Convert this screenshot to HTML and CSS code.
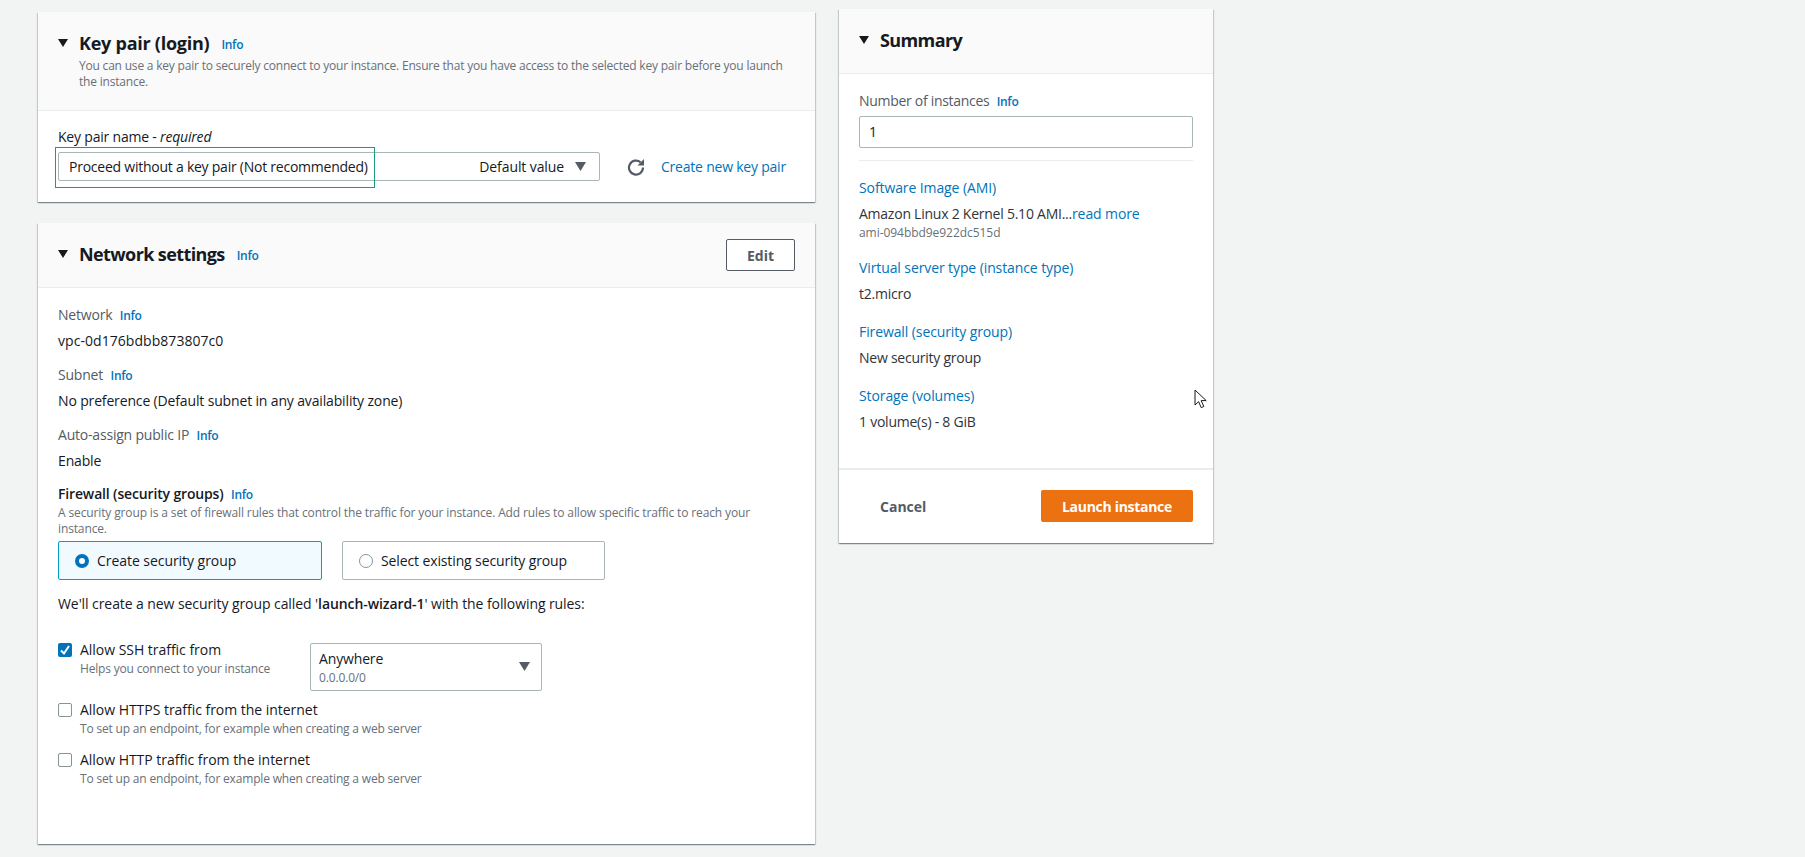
FILE: index.html
```html
<!DOCTYPE html>
<html lang="en">
<head>
<meta charset="utf-8">
<title>Launch an instance</title>
<link rel="stylesheet" href="styles.css">
</head>
<body>
<main class="page">
  <div class="col-left">
    <section class="card card-key">
      <header class="head head-key">
        <div class="title-row">
          <svg class="caret" viewBox="0 0 10 8"><path d="M0 0h10L5 8z"/></svg>
          <h2 class="h-key">Key pair (login)</h2><a class="info info-h">Info</a>
        </div>
        <p class="head-desc">You can use a key pair to securely connect to your instance. Ensure that you have access to the selected key pair before you launch the instance.</p>
      </header>
      <div class="key-body">
        <div class="label key-label">Key pair name - <em>required</em></div>
        <div class="key-row">
          <div class="select">
            <span>Proceed without a key pair (Not recommended)</span>
            <span class="sel-right">Default value
              <svg class="sel-caret" viewBox="0 0 11 9"><path d="M0 0h11L5.500 9z"/></svg>
            </span>
          </div>
          <div class="annotation"></div>
          <svg class="refresh" viewBox="0 0 18 18"><path d="M13.600 4.300A7 7 0 1 0 16 9.500" fill="none" stroke="#545b64" stroke-width="2.200"/><path d="M17 1v6.500h-6.500z" fill="#545b64"/></svg>
          <a class="link create">Create new key pair</a>
        </div>
      </div>
    </section>

    <section class="card card-net">
      <header class="head head-net">
        <div class="title-row">
          <svg class="caret" viewBox="0 0 10 8"><path d="M0 0h10L5 8z"/></svg>
          <h2 class="h-net">Network settings</h2><a class="info info-h">Info</a>
        </div>
        <button class="edit">Edit</button>
      </header>
      <div class="net-body">
        <div class="kv"><div class="label">Network <a class="info">Info</a></div><div class="value value-id">vpc-0d176bdbb873807c0</div></div>
        <div class="kv"><div class="label">Subnet <a class="info">Info</a></div><div class="value">No preference (Default subnet in any availability zone)</div></div>
        <div class="kv kv-last"><div class="label">Auto-assign public IP <a class="info">Info</a></div><div class="value">Enable</div></div>
        <div class="fw-title"><b>Firewall (security groups)</b> <a class="info">Info</a></div>
        <p class="fw-desc">A security group is a set of firewall rules that control the traffic for your instance. Add rules to allow specific traffic to reach your instance.</p>
        <div class="tiles">
          <div class="tile tile-on"><span class="radio radio-on"></span>Create security group</div>
          <div class="tile"><span class="radio"></span>Select existing security group</div>
        </div>
        <p class="will">We'll create a new security group called '<b>launch-wizard-1</b>' with the following rules:</p>
        <div class="rule rule-ssh">
          <span class="check check-on"><svg viewBox="0 0 14 14"><path d="M3 7.500l3 3 5-7.500" fill="none" stroke="#fff" stroke-width="2"/></svg></span>
          <div class="rule-text">
            <div class="rule-label">Allow SSH traffic from</div>
            <div class="rule-help">Helps you connect to your instance</div>
          </div>
          <div class="source">
            <div><div class="src-main">Anywhere</div><div class="src-sub">0.0.0.0/0</div></div>
            <svg class="sel-caret" viewBox="0 0 11 9"><path d="M0 0h11L5.500 9z"/></svg>
          </div>
        </div>
        <div class="rule rule-https">
          <span class="check"></span>
          <div class="rule-text">
            <div class="rule-label">Allow HTTPS traffic from the internet</div>
            <div class="rule-help">To set up an endpoint, for example when creating a web server</div>
          </div>
        </div>
        <div class="rule rule-http">
          <span class="check"></span>
          <div class="rule-text">
            <div class="rule-label">Allow HTTP traffic from the internet</div>
            <div class="rule-help">To set up an endpoint, for example when creating a web server</div>
          </div>
        </div>
      </div>
    </section>
  </div>

  <aside class="card summary">
    <header class="head head-sum">
      <div class="title-row">
        <svg class="caret" viewBox="0 0 10 8"><path d="M0 0h10L5 8z"/></svg>
        <h2 class="h-sum">Summary</h2>
      </div>
    </header>
    <div class="sum-body">
      <div class="label sum-label">Number of instances <a class="info">Info</a></div>
      <div class="input">1</div>
      <hr class="divider">
      <a class="link sum-link">Software Image (AMI)</a>
      <div class="sum-val">Amazon Linux 2 Kernel 5.10 AMI...<a class="link">read more</a></div>
      <div class="sum-sub">ami-094bbd9e922dc515d</div>
      <a class="link sum-link sec-2">Virtual server type (instance type)</a>
      <div class="sum-val">t2.micro</div>
      <a class="link sum-link sec-3">Firewall (security group)</a>
      <div class="sum-val">New security group</div>
      <a class="link sum-link sec-3">Storage (volumes)</a>
      <div class="sum-val">1 volume(s) - 8 GiB</div>
    </div>
    <footer class="sum-foot">
      <button class="cancel">Cancel</button>
      <button class="launch">Launch instance</button>
    </footer>
    <svg class="cursor" viewBox="0 0 13 20"><path d="M1 1v15l3.600-3.400 2.600 6 2.600-1.100-2.600-5.900h5z" fill="#fff" stroke="#16191f" stroke-width="1"/></svg>
  </aside>
</main>
</body>
</html>
```
FILE: styles.css
```css
* { box-sizing: border-box; }
html, body { margin: 0; height: 100%; }
body {
  background: #f2f3f3;
  color: #16191f;
  font-family: "Open Sans", "Noto Sans", sans-serif;
  font-size: 14px;
  line-height: 20px;
  letter-spacing: -.15px;
  overflow: hidden;
}
.page { display: flex; align-items: flex-start; padding-left: 38px; }
.col-left { width: 777px; padding-top: 12px; display: flex; flex-direction: column; gap: 21px; }
.card {
  background: #fff;
  position: relative;
  box-shadow: 0 1px 1px 0 rgba(0,28,36,.3), 1px 1px 1px 0 rgba(0,28,36,.15), -1px 1px 1px 0 rgba(0,28,36,.15);
}
.head { background: #fafafa; border-bottom: 1px solid #eaeded; }
.head-key { height: 99px; padding: 20px 24px 0 20px; }
.head-net { height: 65px; padding: 20px 20px 0 20px; display: flex; justify-content: space-between; }
.head-sum { height: 65px; padding: 20px; }
.title-row { display: flex; align-items: center; height: 22px; }
.caret { width: 10px; height: 8px; fill: #16191f; margin-right: 11px; flex: none; }
h2 { margin: 0; font-size: 18px; line-height: 22px; font-weight: 700; }
.h-key { letter-spacing: -.25px; }
.h-net { letter-spacing: -.6px; }
.h-sum { letter-spacing: -.6px; }
.info { color: #0073bb; font-size: 12px; font-weight: 600; margin-left: 4px; letter-spacing: -.3px; }
.info-h { margin-left: 12px; position: relative; top: 2px; }
.head-desc { margin: 4px 0 0 21px; font-size: 12px; line-height: 16px; color: #687078; letter-spacing: -.2px; }
.label { color: #545b64; letter-spacing: -.2px; }
.link { color: #0073bb; letter-spacing: -.1px; }
.key-body { height: 91px; padding: 16px 20px 0; }
.key-label { color: #16191f; height: 20px; margin-bottom: 5px; }
.key-row { display: flex; align-items: center; position: relative; height: 29px; }
.select {
  width: 542px; height: 29px; padding: 0 13px 0 10px; border: 1px solid #aab7b8; border-radius: 2px;
  display: flex; align-items: center; justify-content: space-between; letter-spacing: -.24px;
}
.sel-right { display: flex; align-items: center; gap: 11px; letter-spacing: -.1px; }
.sel-caret { width: 11px; height: 9px; fill: #545b64; }
.annotation { position: absolute; left: -3px; top: -5px; width: 320px; height: 41px; border: 1px solid #1a9c7a; }
.refresh { width: 18px; height: 18px; margin-left: 27px; flex: none; }
.create { margin-left: 16px; white-space: nowrap; letter-spacing: -.22px; }
.edit {
  width: 69px; height: 32px; margin-top: -4px; background: #fff; border: 1px solid #545b64; border-radius: 2px;
  color: #545b64; font: 700 14px "Open Sans", sans-serif;
}
.net-body { height: 556px; padding: 17px 20px 0; }
.kv { height: 60px; }
.kv-last { height: 59px; }
.kv .value { margin-top: 5px; }
.kv .value-id { letter-spacing: .05px; }
.fw-title { height: 20px; }
.fw-title b { font-weight: 600; }
.fw-desc { margin: 0; height: 32px; padding-top: 1px; font-size: 12px; line-height: 16px; color: #687078; letter-spacing: -.13px; }
.tiles { display: flex; gap: 20px; margin-top: 5px; letter-spacing: -.05px; }
.tile {
  width: 264px; height: 39px; display: flex; align-items: center; padding-left: 16px;
  border: 1px solid #aab7b8; border-radius: 2px; color: #16191f;
}
.tile + .tile { width: 263px; letter-spacing: -.12px; }
.tile-on { background: #f1faff; border-color: #00a1c9; }
.radio { width: 14px; height: 14px; border: 1px solid #879596; border-radius: 50%; margin-right: 8px; background: #fff; flex: none; }
.radio-on { border: 4px solid #0073bb; }
.will { margin: 14px 0 0; height: 20px; letter-spacing: -.08px; }
.will b { font-weight: 600; }
.rule { display: flex; align-items: flex-start; }
.rule-ssh { margin-top: 29px; height: 60px; }
.rule-https { height: 50px; }
.rule-http { height: 50px; }
.check { width: 14px; height: 14px; border: 1px solid #879596; border-radius: 2px; margin-right: 8px; flex: none; }
.check-on { background: #0073bb; border: 0; }
.check-on svg { display: block; width: 14px; height: 14px; }
.rule-text { width: 230px; white-space: nowrap; margin-top: -3px; }
.rule-label { letter-spacing: -.03px; }
.rule-help { font-size: 12px; line-height: 16px; color: #687078; margin-top: 1px; letter-spacing: -.18px; }
.source {
  width: 232px; height: 48px; border: 1px solid #aab7b8; border-radius: 2px; padding: 5px 11px 0 8px;
  display: flex; justify-content: space-between; align-items: center;
}
.source > div { align-self: flex-start; }
.source .sel-caret { margin-top: -6px; }
.src-sub { font-size: 12px; line-height: 16px; color: #687078; margin-top: 2px; }
.src-main { line-height: 19px; }
.summary { width: 374px; margin: 9px 0 0 24px; height: 534px; }
.sum-body { height: 396px; padding: 17px 20px 0; border-bottom: 2px solid #eaeded; }
.sum-label { height: 20px; letter-spacing: -.3px; }
.input { margin-top: 5px; height: 32px; padding: 0 9px; border: 1px solid #aab7b8; border-radius: 2px; line-height: 30px; }
.divider { border: 0; border-top: 1px solid #eaeded; margin: 12px 0 17px; }
.sum-link { display: block; height: 20px; }
.sum-val { margin-top: 6px; height: 20px; color: #2f343a; letter-spacing: -.24px; }
.sum-sub { font-size: 12px; line-height: 16px; color: #687078; margin-top: 1px; letter-spacing: -.05px; }
.sec-2 { margin-top: 17px; }
.sec-3 { margin-top: 18px; }
.sum-foot { display: flex; justify-content: space-between; align-items: center; padding: 20px 20px 0 41px; }
.cancel { background: none; border: 0; padding: 0; color: #545b64; font: 700 14px "Open Sans", sans-serif; }
.launch {
  width: 152px; height: 32px; background: #ec7211; border: 0; border-radius: 2px; color: #fff;
  font: 700 14px "Open Sans", sans-serif; letter-spacing: -.3px;
}
.cursor { position: absolute; left: 355px; top: 380px; width: 13px; height: 20px; }
```
